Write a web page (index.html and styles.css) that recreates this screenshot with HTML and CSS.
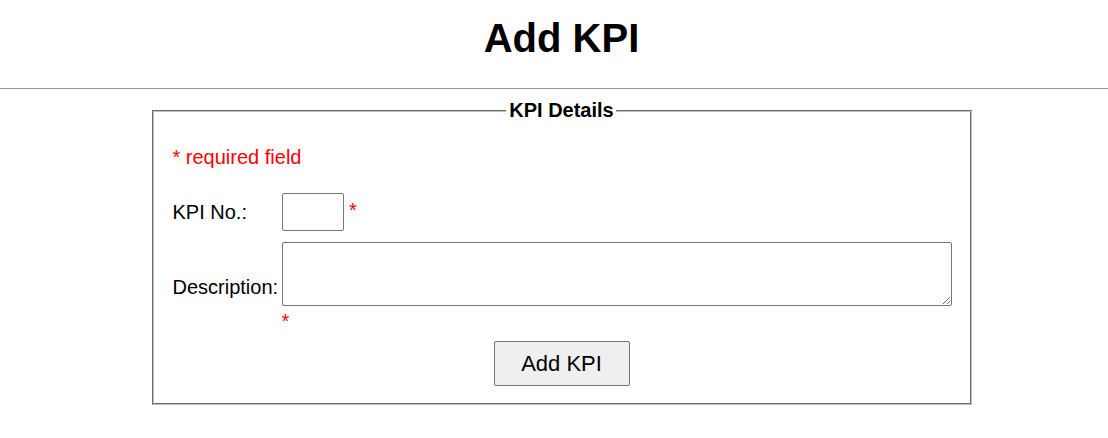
FILE: index.html
```html
<!DOCTYPE html>
<html lang="en">
<head>
<meta charset="utf-8">
<title>Add KPI</title>
<link rel="stylesheet" href="styles.css">
</head>
<body>
<header class="page-header">
  <h1 class="page-title">Add KPI</h1>
</header>
<main class="page-main">
  <form class="kpi-form" action="#" onsubmit="return false;">
    <fieldset class="kpi-fieldset">
      <legend class="kpi-legend">KPI Details</legend>
      <p class="required-note">* required field</p>
      <div class="form-grid">
        <label class="form-label" for="kpiNo">KPI No.:</label>
        <div class="form-field">
          <input class="kpi-no" id="kpiNo" type="text"> <span class="req">*</span>
        </div>
        <label class="form-label" for="kpiDesc">Description:</label>
        <div class="form-field">
          <textarea class="kpi-desc" id="kpiDesc"></textarea>
          <div class="req req-below">*</div>
        </div>
      </div>
      <div class="form-actions">
        <button class="add-btn" type="submit">Add KPI</button>
      </div>
    </fieldset>
  </form>
</main>
</body>
</html>
```

FILE: styles.css
```css
html, body {
  margin: 0;
  padding: 0;
  background: #ffffff;
}

body {
  font-family: "Liberation Sans", Arial, sans-serif;
  font-size: 20px;
  color: #000000;
}

.page-header {
  border-bottom: 1px solid #9a9a9a;
  padding-left: 15px;
}

.page-title {
  margin: 15px 0 27px;
  font-size: 40px;
  font-weight: bold;
  line-height: 46px;
  text-align: center;
}

.page-main {
  padding-left: 15px;
}

.kpi-form {
  margin: 0;
}

.kpi-fieldset {
  box-sizing: border-box;
  width: 820px;
  margin: 10px auto 0;
  padding: 0 18px 17px 17px;
  border: 2px groove #c0c0c0;
  min-width: 0;
}

.kpi-legend {
  margin: 0 auto;
  padding: 0 2px 0 3px;
  font-size: 20px;
  font-weight: bold;
  line-height: 23px;
}

.required-note {
  margin: 24px 0 0;
  padding-left: 2px;
  color: #ff0000;
  line-height: 23px;
}

.form-grid {
  display: grid;
  grid-template-columns: 111px 1fr;
  row-gap: 11px;
  margin-top: 24px;
}

.form-label {
  align-self: center;
  padding-left: 2px;
  line-height: 23px;
}

.form-field {
  line-height: 23px;
}

.kpi-no {
  box-sizing: border-box;
  width: 62px;
  height: 38px;
  margin: 0;
  padding: 0 4px;
  border: 1px solid #767676;
  border-radius: 2px;
  font-family: inherit;
  font-size: 20px;
  vertical-align: middle;
}

.kpi-desc {
  display: block;
  box-sizing: border-box;
  width: 100%;
  height: 64px;
  margin: 0;
  padding: 2px;
  border: 1px solid #767676;
  border-radius: 2px;
  font-family: inherit;
  font-size: 20px;
}

.req {
  color: #ff0000;
}

.req-below {
  margin-top: 4px;
}

.form-actions {
  display: flex;
  justify-content: center;
  margin-top: 8px;
  padding-left: 1px;
}

.add-btn {
  box-sizing: border-box;
  width: 136px;
  height: 45px;
  margin: 0;
  padding: 0;
  border: 1px solid #767676;
  border-radius: 2px;
  background: #efefef;
  color: #000000;
  font-family: inherit;
  font-size: 22px;
}
```
